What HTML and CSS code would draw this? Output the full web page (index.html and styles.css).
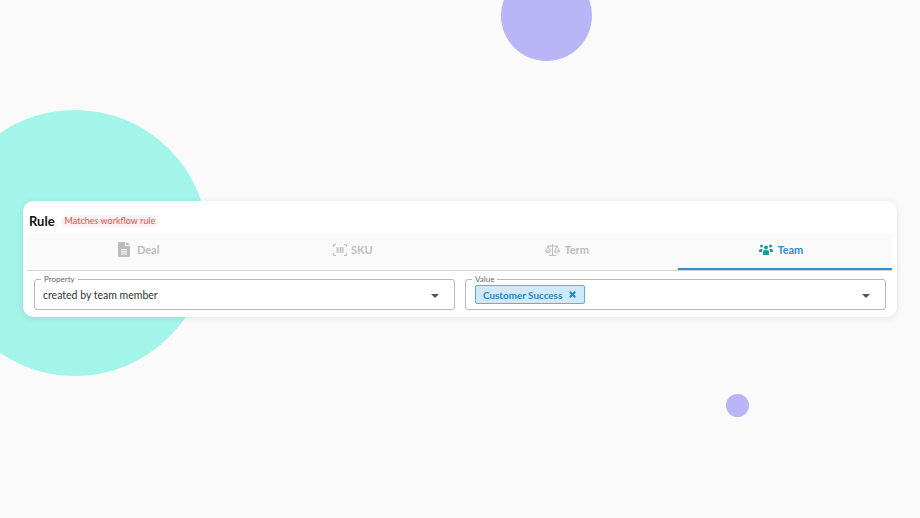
FILE: index.html
```html
<!DOCTYPE html>
<html lang="en">
<head>
  <meta charset="UTF-8" />
  <meta name="viewport" content="width=device-width, initial-scale=1.0">
  <title>Rule</title>
  <link rel="stylesheet" href="styles.css">
</head>
<body>

  <div class="blob blob-teal"></div>
  <div class="blob blob-purple"></div>
  <div class="blob blob-dot"></div>

  <section class="rule-card">
    <div class="rule-head">
      <h2>Rule</h2>
      <span class="rule-badge">Matches workflow rule</span>
    </div>

    <div class="tabs">
      <div class="tab">
        <svg class="tab-icon tab-icon-doc" width="12" height="15" viewBox="0 0 12 15"><path fill="#bdbdbd" d="M1 0h6v4h5v10a1 1 0 0 1-1 1H1a1 1 0 0 1-1-1V1a1 1 0 0 1 1-1zm7 0l4 3H8zM3 7v1.2h6V7zm0 2.2v1.2h6V9.2zm0 2.2v1.2h6v-1.2z"/></svg>
        Deal
      </div>
      <div class="tab">
        <svg class="tab-icon" width="14" height="12" viewBox="0 0 14 12"><path fill="none" stroke="#bdbdbd" stroke-width="1" d="M.5 3V.5H3M11 .5h2.500V3M.5 9v2.500H3M11 11.500h2.500V9"/><path fill="#bdbdbd" d="M3.500 3h1.200v6H3.500zM5.500 3h.8v6h-.8zM7 3h1.500v6H7zM9.300 3h1.200v6H9.300z"/></svg>
        SKU
      </div>
      <div class="tab">
        <svg class="tab-icon" width="15" height="12" viewBox="0 0 15 12"><path fill="none" stroke="#bdbdbd" stroke-width="1" d="M7.500 0v11M4 11.500h7M2 2h11M3 2L.7 7h4.600zM12 2L9.700 7h4.600zM.7 7a2.300 2 0 0 0 4.600 0M9.700 7a2.300 2 0 0 0 4.600 0"/></svg>
        Term
      </div>
      <div class="tab tab-active">
        <svg class="tab-icon" width="14" height="11" viewBox="0 0 14 11"><g fill="#1f9a9a"><circle cx="2.500" cy="2" r="1.500"/><circle cx="11.500" cy="2" r="1.500"/><circle cx="7" cy="3.500" r="2"/><path d="M0 6.500a1.500 1.500 0 0 1 1.500-1.500h2L3 8H0zM14 6.500A1.500 1.500 0 0 0 12.500 5h-2l.5 3h3zM4 8a2 2 0 0 1 2-2h2a2 2 0 0 1 2 2v3H4z"/></g></svg>
        Team
      </div>
    </div>

    <div class="fields">
      <fieldset class="field">
        <legend>Property</legend>
        <span class="field-text">created by team member</span>
        <span class="caret"></span>
      </fieldset>
      <fieldset class="field">
        <legend>Value</legend>
        <span class="chip">Customer Success
          <svg width="7" height="7" viewBox="0 0 7 7"><path stroke="#2b86c5" stroke-width="2" d="M.7.7l5.600 5.600M6.300.7L.7 6.300"/></svg>
        </span>
        <span class="caret"></span>
      </fieldset>
    </div>
  </section>

</body>
</html>
```

FILE: styles.css
```css
html, body {
  height: 100%;
}

body {
  background: #fafafa;
  font-family: 'Lato', sans-serif;
  margin: 0;
  padding: 201px 23px 0;
  box-sizing: border-box;
  overflow: hidden;
  position: relative;
}

.blob {
  position: absolute;
  border-radius: 50%;
}

.blob-teal {
  left: -58px;
  top: 110px;
  width: 266px;
  height: 266px;
  background: #a2f5e8;
}

.blob-purple {
  left: 501px;
  top: -30px;
  width: 91px;
  height: 91px;
  background: #b9b5f7;
}

.blob-dot {
  left: 726px;
  top: 394px;
  width: 23px;
  height: 23px;
  background: #b9b5f7;
}

.rule-card {
  position: relative;
  width: 874px;
  height: 116px;
  box-sizing: border-box;
  background: #fff;
  border-radius: 10px;
  box-shadow: 0 1px 6px rgba(0, 0, 0, 0.1);
  padding: 12px 5px 0 4px;
}

.rule-head {
  display: flex;
  align-items: center;
  gap: 6px;
  height: 16px;
  margin: 0 0 5px 2px;
}

.rule-head h2 {
  margin: 0;
  font-size: 13px;
  font-weight: 700;
  color: #111;
}

.rule-badge {
  background: #fff1f1;
  color: #f0484a;
  font-size: 9px;
  line-height: 12px;
  padding: 0 4px;
  border-radius: 6px;
}

.tabs {
  display: flex;
  height: 37px;
  box-sizing: border-box;
  padding-left: 8px;
  background: #fafafa;
  border-bottom: 1px solid #d6d6d6;
  border-radius: 4px 4px 0 0;
}

.tab {
  flex: 1;
  display: flex;
  align-items: center;
  justify-content: center;
  gap: 4px;
  padding: 0 7px 5px 0;
  font-size: 11px;
  font-weight: 700;
  color: #bdbdbd;
}

.tab-icon-doc {
  margin-right: 3px;
}

.tab-active {
  color: #2d8fd5;
  border-bottom: 2px solid #2d8fd5;
  padding-bottom: 3px;
}

.fields {
  display: flex;
  gap: 10px;
  padding: 8px 6px 0 7px;
}

.field {
  flex: 1;
  position: relative;
  display: flex;
  align-items: center;
  height: 31px;
  box-sizing: border-box;
  margin: 0;
  padding: 0 9px;
  border: 1px solid #b8b8b8;
  border-radius: 3px;
  min-width: 0;
}

.field legend {
  position: absolute;
  top: -6px;
  left: 6px;
  padding: 0 3px;
  background: #fff;
  font-size: 8px;
  line-height: 10px;
  color: #666;
}

.field-text {
  margin-left: -1px;
  font-size: 10.500px;
  color: #333;
}

.chip {
  display: flex;
  align-items: center;
  gap: 7px;
  height: 19px;
  box-sizing: border-box;
  padding: 0 8px 0 7px;
  background: #cfe9fb;
  border: 1px solid #5aaee5;
  border-radius: 2px;
  font-size: 9.900px;
  font-weight: 700;
  color: #2b86c5;
}

.caret {
  position: absolute;
  right: 15px;
  top: 14px;
  width: 0;
  height: 0;
  border-left: 4.500px solid transparent;
  border-right: 4.500px solid transparent;
  border-top: 4.500px solid #555;
}
```
